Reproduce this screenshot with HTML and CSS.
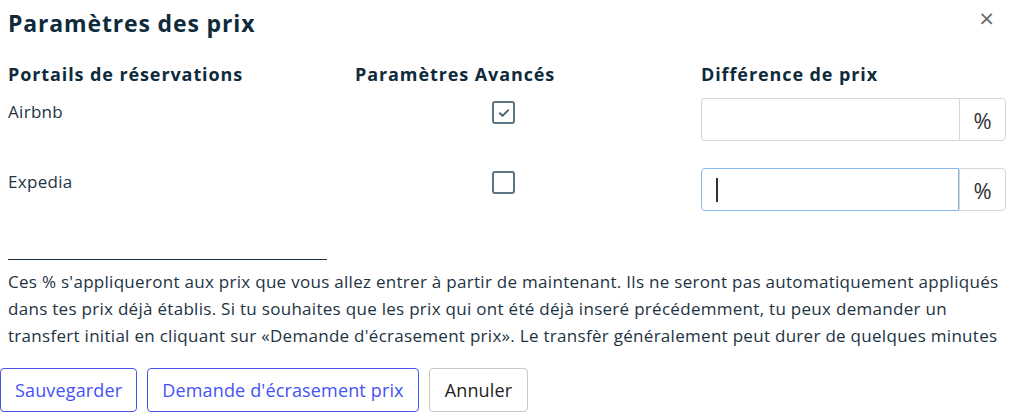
FILE: index.html
```html
<!DOCTYPE html>
<html lang="fr">
<head>
<meta charset="utf-8">
<title>Paramètres des prix</title>
<link rel="stylesheet" href="styles.css">
</head>
<body>
<div class="modal">
  <div class="modal-header">
    <h1 class="title">Paramètres des prix</h1>
    <button class="close" aria-label="Fermer">×</button>
  </div>
  <div class="grid">
    <div class="head">Portails de réservations</div>
    <div class="head">Paramètres Avancés</div>
    <div class="head">Différence de prix</div>

    <div class="portal">Airbnb</div>
    <div class="check-cell"><span class="checkbox checked"><svg viewBox="0 0 24 24" width="14" height="14"><path d="M5 12.5l4.5 4.5L19 7.5" fill="none" stroke="#4a6070" stroke-width="3.4" stroke-linecap="round" stroke-linejoin="round"/></svg></span></div>
    <div class="input-group"><div class="input"></div><div class="addon">%</div></div>

    <div class="portal">Expedia</div>
    <div class="check-cell"><span class="checkbox"></span></div>
    <div class="input-group"><div class="input focus"><span class="caret"></span></div><div class="addon">%</div></div>
  </div>
  <div class="rule"></div>
  <p class="note">Ces % s'appliqueront aux prix que vous allez entrer à partir de maintenant. Ils ne seront pas automatiquement appliqués dans tes prix déjà établis. Si tu souhaites que les prix qui ont été déjà inseré précédemment, tu peux demander un transfert initial en cliquant sur «Demande d'écrasement prix». Le transfèr généralement peut durer de quelques minutes</p>
  <div class="actions">
    <button class="btn btn-primary">Sauvegarder</button>
    <button class="btn btn-primary">Demande d'écrasement prix</button>
    <button class="btn btn-default">Annuler</button>
  </div>
</div>
</body>
</html>
```
FILE: styles.css
```css
* { box-sizing: border-box; }
html, body { margin: 0; padding: 0; background: #fff; }
body {
  font-family: "Open Sans", Lato, sans-serif;
  color: #1d3342;
  font-size: 17px;
}
.modal-header {
  display: flex;
  justify-content: space-between;
  align-items: center;
  padding: 2px 14px 0 8px;
  height: 44px;
}
.title {
  margin: 0;
  font-size: 23px;
  font-weight: 700;
  letter-spacing: 0.85px;
  color: #0e2a3b;
}
.close {
  border: 0;
  background: none;
  font-size: 20px;
  color: #666;
  padding: 0;
  line-height: 1;
  margin-top: -10px;
  font-family: "DejaVu Sans", sans-serif;
}
.grid {
  display: grid;
  grid-template-columns: 347px 346px 305px;
  grid-template-rows: 34px 70px 42px;
  padding: 19px 0 0 8px;
  align-items: start;
}
.head {
  font-size: 18px;
  font-weight: 700;
  letter-spacing: 0.9px;
  color: #0e2a3b;
  line-height: 22px;
}
.portal {
  font-size: 17px;
  letter-spacing: 0.3px;
  padding-top: 3px;
}
.check-cell { padding-left: 137px; padding-top: 4px; }
.checkbox {
  display: flex;
  align-items: center;
  justify-content: center;
  width: 23px;
  height: 23px;
  border: 2px solid #5d7583;
  border-radius: 3px;
}
.input-group {
  display: flex;
  height: 43px;
  width: 305px;
  margin-top: 1px;
}
.input {
  flex: 1;
  border: 1px solid #d4d6d9;
  border-right: 0;
  border-radius: 4px 0 0 4px;
  display: flex;
  align-items: center;
  padding-left: 14px;
}
.input.focus { border: 1px solid #86b8f0; }
.caret { width: 2px; height: 24px; background: #333; }
.addon {
  width: 47px;
  border: 1px solid #d4d6d9;
  border-radius: 0 4px 4px 0;
  display: flex;
  align-items: center;
  justify-content: center;
  font-size: 22px;
  color: #333;
}
.rule {
  margin: 50px 0 0 8px;
  width: 319px;
  border-top: 1px solid #1d3342;
}
.note {
  margin: 0;
  padding: 8px 8px 0 8px;
  line-height: 27px;
  font-size: 17px;
  letter-spacing: 0.29px;
}
.actions {
  display: flex;
  gap: 10px;
  padding-top: 19px;
}
.btn {
  height: 44px;
  padding: 0 14px;
  font-family: inherit;
  font-size: 18px;
  letter-spacing: 0.15px;
  background: #fff;
  border-radius: 4px;
}
.btn-primary { border: 1px solid #4754f0; color: #4453f2; }
.btn-default { border: 1px solid #c8c8c8; color: #222; padding: 0 15px; }
```
